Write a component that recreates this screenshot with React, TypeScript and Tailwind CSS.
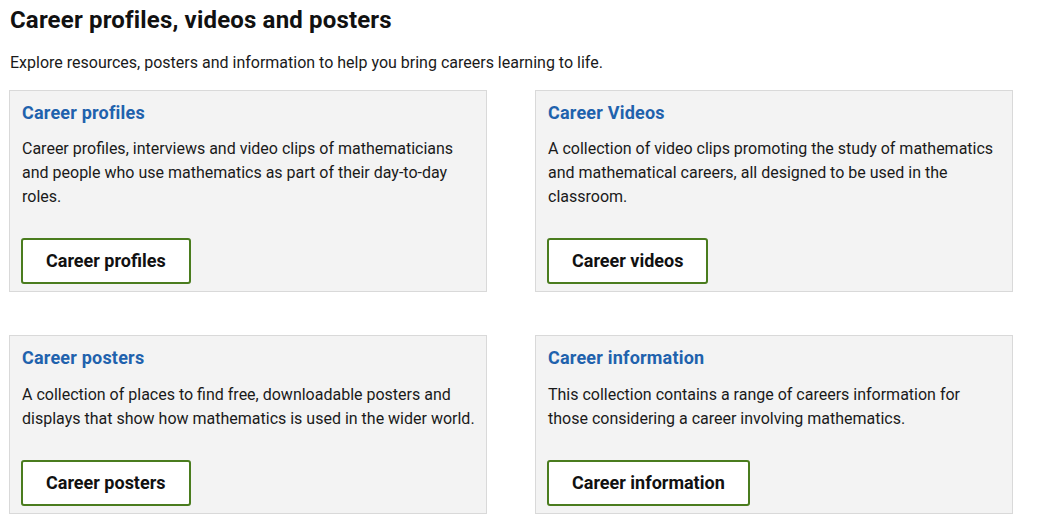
import React from 'react'

interface Resource {
  title: string
  text: string
  button: string
}

const resources: Resource[] = [
  {
    title: 'Career profiles',
    text: 'Career profiles, interviews and video clips of mathematicians and people who use mathematics as part of their day-to-day roles.',
    button: 'Career profiles'
  },
  {
    title: 'Career Videos',
    text: 'A collection of video clips promoting the study of mathematics and mathematical careers, all designed to be used in the classroom.',
    button: 'Career videos'
  },
  {
    title: 'Career posters',
    text: 'A collection of places to find free, downloadable posters and displays that show how mathematics is used in the wider world.',
    button: 'Career posters'
  },
  {
    title: 'Career information',
    text: 'This collection contains a range of careers information for those considering a career involving mathematics.',
    button: 'Career information'
  }
]

const ResourceCard: React.FC<Resource> = ({ title, text, button }) => (
  <div className="border border-[#d9d9d9] bg-[#f3f3f3] pl-3 pr-[11px] pt-[11px] pb-[7px]">
    <h3 className="text-[18px] leading-[1.2] font-bold tracking-[0.2px] text-[#1f62ad]">{title}</h3>
    <p className="mt-[14px] text-[16px] leading-[24px] text-[#1a1a1a]">{text}</p>
    <a
      href="#"
      className="-ml-px mt-[29px] inline-block rounded-[3px] border-2 border-[#4a7c1e] bg-white px-[23px] py-2 text-[18px] leading-[26px] font-bold text-[#111]"
    >
      {button}
    </a>
  </div>
)

export default function App() {
  return (
    <div className="bg-white min-h-screen pt-[6px] pl-[9px]" style={{ fontFamily: 'Roboto, "Liberation Sans", sans-serif' }}>
      <h2 className="pl-px text-[24px] leading-[1.2] font-bold tracking-[0.17px] text-[#111]">Career profiles, videos and posters</h2>
      <p className="pl-px mt-4 text-[16px] leading-[24px] text-[#1a1a1a]">
        Explore resources, posters and information to help you bring careers learning to life.
      </p>
      <div className="mt-[15px] grid grid-cols-[478px_478px] gap-x-12 gap-y-[43px] items-start">
        {resources.map((r) => (
          <ResourceCard key={r.title} {...r} />
        ))}
      </div>
    </div>
  )
}
